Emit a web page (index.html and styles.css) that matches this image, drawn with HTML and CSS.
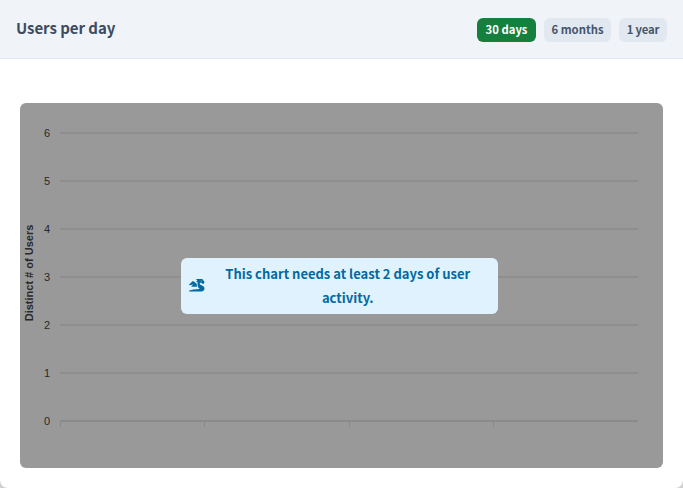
FILE: index.html
```html
<!DOCTYPE html>
<html lang="en">
<head>
<meta charset="utf-8">
<title>Users per day</title>
<link rel="stylesheet" href="styles.css">
</head>
<body>
<section class="card">
  <header class="header">
    <h2 class="title">Users per day</h2>
    <nav class="ranges">
      <button class="range active">30 days</button>
      <button class="range months">6 months</button>
      <button class="range year">1 year</button>
    </nav>
  </header>
  <div class="chart">
    <svg class="plot" width="643" height="365" viewBox="0 0 643 365">
      <g class="grid">
        <path d="M40 30H618M40 78H618M40 126H618M40 174H618M40 222H618M40 270H618"/>
        <path class="axis" d="M40 318H618"/>
        <path class="ticks" d="M40.5 318v6M184.5 318v6M329.5 318v6M473.5 318v6"/>
      </g>
      <g class="labels">
        <text x="30" y="34">6</text>
        <text x="30" y="82">5</text>
        <text x="30" y="130">4</text>
        <text x="30" y="178">3</text>
        <text x="30" y="226">2</text>
        <text x="30" y="274">1</text>
        <text x="30" y="322">0</text>
      </g>
      <text class="axis-title" transform="translate(13 170) rotate(-90)">Distinct # of Users</text>
    </svg>
    <div class="notice">
      <svg class="dragon" viewBox="0 0 640 512"><path d="M18.32 255.78L192 223.96l-91.28 68.69c-10.08 10.08-2.94 27.31 11.31 27.31h222.7c-9.44-26.4-14.73-54.47-14.73-83.38v-42.27l-119.73-87.6c-23.82-15.88-55.29-14.01-77.06 4.59L5.81 227.64c-12.38 10.33-3.45 30.42 12.51 28.14zm556.87 34.1l-100.66-50.31A47.992 47.992 0 0 1 448 196.65v-36.69h64l28.09 22.63c6 6 14.14 9.37 22.63 9.37h30.97a32 32 0 0 0 28.62-17.69l14.31-28.62a32.005 32.005 0 0 0-3.02-33.51l-74.53-99.38C553.02 4.7 543.54 0 533.47 0H296.02c-7.13 0-10.7 8.57-5.66 13.61L352 63.96 292.42 88.8c-5.9 2.95-5.9 11.36 0 14.31L352 127.96v108.62c0 72.08 36.03 139.39 96 179.38-195.59 6.81-344.56 41.01-434.1 60.91C5.78 478.67 0 485.88 0 494.2 0 504 7.95 512 17.76 512h499.08c63.29.01 119.61-47.56 122.99-110.76 2.52-47.28-22.73-90.4-64.64-111.36zM489.18 66.25l45.65 11.41c-2.75 10.91-12.47 18.89-24.13 18.26-12.96-.71-25.85-12.53-21.52-29.67z"/></svg>
      <p class="message">This chart needs at least 2 days of user<br>activity.</p>
    </div>
  </div>
</section>
</body>
</html>
```
FILE: styles.css
```css
* { box-sizing: border-box; }
body { margin: 0; background: #d0d1d3; font-family: "Noto Sans CJK SC", "Noto Sans", sans-serif; }
.card { height: 488px; background: #fff; border-radius: 0 0 8px 8px; overflow: hidden; }
.header {
  height: 59px; padding: 0 16px; display: flex; align-items: center;
  justify-content: space-between; background: #f0f4f9; border-bottom: 1px solid #dfe6ef;
}
.title { margin: 0; padding-bottom: 2px; font-size: 15px; line-height: 24px; font-weight: 600; letter-spacing: -.05px; color: #3c4b60; white-space: nowrap; }
.ranges { display: flex; gap: 8px; padding-top: 1px; }
.range {
  width: 59px; height: 24px; padding: 0; border: 0; border-radius: 6px;
  font: 600 11.3px/23px "Noto Sans CJK SC", "Noto Sans", sans-serif; text-align: center;
  white-space: nowrap; background: #e1e8f0; color: #475569;
}
.months { width: 67px; }
.year { width: 48px; letter-spacing: -.2px; }
.active { background: #15803d; color: #fff; }
.chart {
  margin: 44px 20px 0; height: 365px; display: grid; place-items: center;
  background: #999; border-radius: 6px; overflow: hidden;
}
.plot, .notice { grid-area: 1 / 1; }
.grid { fill: none; stroke: #8b8b8c; stroke-width: 1.5; }
.axis { stroke: #858688; }
.ticks { stroke: #87888a; stroke-width: 1; }
.labels { font: 11px "Liberation Sans", sans-serif; fill: #292929; text-anchor: end; }
.axis-title { font: bold 11px "Liberation Sans", sans-serif; fill: #292929; text-anchor: middle; }
.notice {
  width: 317px; height: 56px; margin-right: 4px; padding: 4px 8px; display: flex; align-items: center;
  background: #e0f2fe; border-radius: 6px; color: #0369a1;
}
.dragon { width: 15.5px; height: 12.4px; flex: none; fill: #0369a1; }
.message { flex: 1; margin: 0; padding-left: 1px; text-align: center; font-size: 13px; line-height: 24px; font-weight: 600; white-space: nowrap; }
```
